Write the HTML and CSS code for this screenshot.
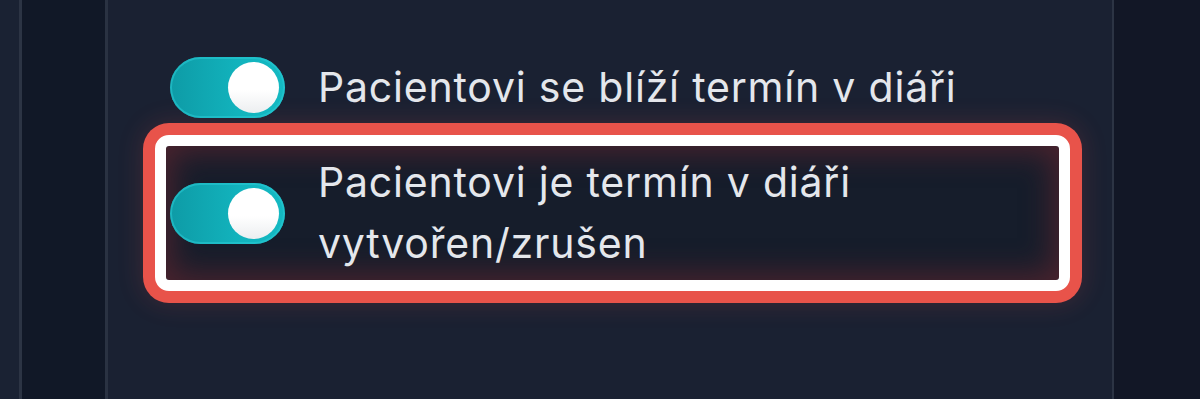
FILE: index.html
```html
<!DOCTYPE html>
<html lang="cs">
<head>
    <meta charset="UTF-8">
    <meta name="viewport" content="width=device-width, initial-scale=1.0">
    <title>Notifikace pacienta</title>
    <link rel="stylesheet" href="styles.css">
</head>
<body>
    <div class="edge-left"></div>
    <div class="nav-rail"></div>

    <div class="panel">
        <div class="option-list">
            <label class="option-row">
                <span class="toggle is-on"><span class="knob"></span></span>
                <span class="option-text">Pacientovi se blíží termín v diáři</span>
            </label>

            <!-- highlighted row -->
            <div class="highlight">
                <label class="option-row">
                    <span class="toggle is-on"><span class="knob"></span></span>
                    <span class="option-text">Pacientovi je termín v diáři<br>vytvořen/zrušen</span>
                </label>
            </div>
        </div>
    </div>

    <div class="edge-right"></div>
</body>
</html>
```

FILE: styles.css
```css
html, body {
    height: 100%;
    margin: 0;
    font-family: Inter, "Noto Sans", sans-serif;
}

body {
    display: flex;
    overflow: hidden;
    background-color: #121726;
}

.edge-left {
    width: 19px;
    flex-shrink: 0;
    background-color: #1a2233;
    border-right: 3px solid #2c3444;
}

.nav-rail {
    width: 83px;
    flex-shrink: 0;
    background-color: #111827;
    border-right: 3px solid #2a3242;
}

.panel {
    width: 1006px;
    flex-shrink: 0;
    background-color: #1a2132;
    border-right: 2px solid #2c3444;
    box-sizing: border-box;
    padding: 57px 0 0 62px;
}

.edge-right {
    flex-grow: 1;
    background-color: #121726;
}

.option-list {
    display: flex;
    flex-direction: column;
}

.option-row {
    display: flex;
    align-items: center;
    gap: 33px;
}

.option-text {
    font-size: 41px;
    line-height: 61px;
    letter-spacing: 0.8px;
    color: #e4e7ec;
}

.toggle {
    position: relative;
    width: 115px;
    height: 61px;
    flex-shrink: 0;
    border-radius: 31px;
    background: linear-gradient(90deg, #0e9ba6 0%, #12b3bd 60%, #14b9c2 100%);
    box-shadow: inset 0 0 0 2px rgba(40, 200, 210, 0.6);
}

.toggle .knob {
    position: absolute;
    top: 5px;
    right: 6px;
    width: 51px;
    height: 51px;
    border-radius: 50%;
    background: linear-gradient(180deg, #ffffff 55%, #eceef0 100%);
}

.highlight {
    margin: 17px 0 0 -15px;
    width: 915px;
    box-sizing: border-box;
    padding: 6px 4px;
    border: 11px solid #ffffff;
    border-radius: 14px;
    background-color: #161d2b;
    box-shadow:
        0 0 0 12px #e8534a,
        0 0 24px 14px rgba(232, 83, 74, 0.16),
        inset 0 0 30px 6px rgba(120, 40, 48, 0.55);
}
```
